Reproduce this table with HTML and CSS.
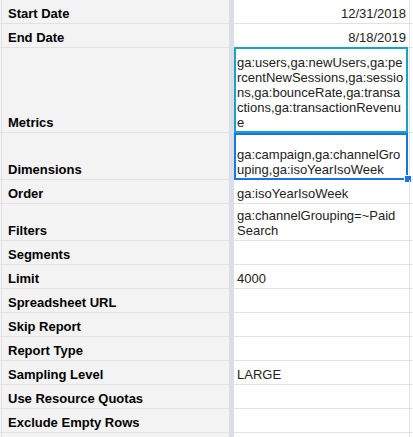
FILE: index.html
```html
<!DOCTYPE html>
<html>
<head>
<meta charset="utf-8">
<link rel="stylesheet" href="styles.css">
</head>
<body>
<div class="sheet">
  <div class="row h24"><div class="a"></div><div class="label">Start Date</div><div class="freeze"></div><div class="val right">12/31/2018</div><div class="rest"></div></div>
  <div class="row h24"><div class="a"></div><div class="label">End Date</div><div class="freeze"></div><div class="val right">8/18/2019</div><div class="rest"></div></div>
  <div class="row h85"><div class="a"></div><div class="label">Metrics</div><div class="freeze"></div><div class="val">ga:users,ga:newUsers,ga:pe<br>rcentNewSessions,ga:sessio<br>ns,ga:bounceRate,ga:transa<br>ctions,ga:transactionRevenu<br>e<div class="sel sel-teal"></div></div><div class="rest"></div></div>
  <div class="row h47"><div class="a"></div><div class="label">Dimensions</div><div class="freeze"></div><div class="val">ga:campaign,ga:channelGro<br>uping,ga:isoYearIsoWeek<div class="sel sel-blue"><div class="handle"></div></div></div><div class="rest"></div></div>
  <div class="row h24"><div class="a"></div><div class="label">Order</div><div class="freeze"></div><div class="val">ga:isoYearIsoWeek</div><div class="rest"></div></div>
  <div class="row h37"><div class="a"></div><div class="label">Filters</div><div class="freeze"></div><div class="val">ga:channelGrouping=~Paid<br>Search</div><div class="rest"></div></div>
  <div class="row h24"><div class="a"></div><div class="label">Segments</div><div class="freeze"></div><div class="val"></div><div class="rest"></div></div>
  <div class="row h24"><div class="a"></div><div class="label">Limit</div><div class="freeze"></div><div class="val">4000</div><div class="rest"></div></div>
  <div class="row h24"><div class="a"></div><div class="label">Spreadsheet URL</div><div class="freeze"></div><div class="val"></div><div class="rest"></div></div>
  <div class="row h24"><div class="a"></div><div class="label">Skip Report</div><div class="freeze"></div><div class="val"></div><div class="rest"></div></div>
  <div class="row h24"><div class="a"></div><div class="label">Report Type</div><div class="freeze"></div><div class="val"></div><div class="rest"></div></div>
  <div class="row h24"><div class="a"></div><div class="label">Sampling Level</div><div class="freeze"></div><div class="val">LARGE</div><div class="rest"></div></div>
  <div class="row h24"><div class="a"></div><div class="label">Use Resource Quotas</div><div class="freeze"></div><div class="val"></div><div class="rest"></div></div>
  <div class="row h24"><div class="a"></div><div class="label">Exclude Empty Rows</div><div class="freeze"></div><div class="val"></div><div class="rest"></div></div>
  <div class="row h24"><div class="a"></div><div class="label"></div><div class="freeze"></div><div class="val"></div><div class="rest"></div></div>
</div>
</body>
</html>
```
FILE: styles.css
```css
html, body {
  margin: 0;
  padding: 0;
  background: #ffffff;
  overflow: hidden;
}
.sheet {
  width: 413px;
  height: 437px;
  overflow: hidden;
  font-family: "Liberation Sans", Arial, sans-serif;
  font-size: 13px;
  line-height: 15px;
}
.row {
  display: flex;
}
.h24 { height: 24px; }
.h85 { height: 85px; }
.h47 { height: 47px; }
.h37 { height: 37px; }
.row > div {
  box-sizing: border-box;
  border-bottom: 1px solid #e2e2e2;
}
.a {
  width: 2px;
  background: #f3f3f3;
  border-right: 1px solid #e2e2e2;
}
.label {
  width: 227px;
  background: #f3f3f3;
  font-weight: bold;
  color: #000;
  display: flex;
  align-items: flex-end;
  padding: 0 4px 2px 6px;
  white-space: nowrap;
}
.row > .freeze {
  width: 5px;
  background: #dadfe6;
  border-bottom: none;
}
.val {
  width: 176px;
  position: relative;
  border-right: 1px solid #e2e2e2;
  color: #222;
  padding: 0 3px 2px 3px;
  display: flex;
  flex-direction: column;
  justify-content: flex-end;
  white-space: nowrap;
}
.val.right {
  align-items: flex-end;
}
.rest {
  flex: 1;
  background: #fff;
}
.sel {
  position: absolute;
  left: 0;
  right: 1px;
  box-sizing: border-box;
  border: 2px solid;
}
.sel-teal {
  top: -1px;
  bottom: -1px;
  border-color: #17a3c4;
}
.sel-blue {
  top: 0;
  bottom: -1px;
  border-color: #1a73e8;
}
.handle {
  position: absolute;
  right: -6px;
  bottom: -5px;
  width: 6px;
  height: 6px;
  background: #1a73e8;
  border: 1px solid #fff;
}
```
